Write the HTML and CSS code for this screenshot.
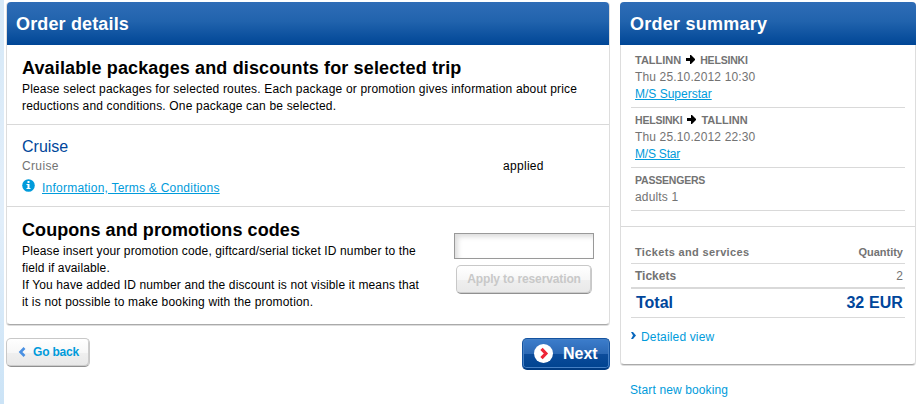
FILE: index.html
```
<!DOCTYPE html>
<html lang="en">
<head>
    <meta charset="UTF-8">
    <title>Order details</title>
    <link rel="stylesheet" href="styles.css">
</head>
<body>
    <div class="page">

        <!-- Order details -->
        <main class="details">
            <div class="panel">
                <h1>Order details</h1>
                <section class="block intro">
                    <h2>Available packages and discounts for selected trip</h2>
                    <p>Please select packages for selected routes. Each package or promotion gives information about price<br>reductions and conditions. One package can be selected.</p>
                </section>
                <section class="block package">
                    <div>
                        <h3>Cruise</h3>
                        <p class="grey">Cruise</p>
                        <div class="info">
                            <svg width="13" height="13" viewBox="0 0 13 13"><circle cx="6.5" cy="6.5" r="6.3" fill="#009bdb"/><path d="M5.5 2h2v2h-2zM4.5 5h3v4h1v1h-4V9h1V6h-1z" fill="#fff"/></svg>
                            <a href="#">Information, Terms &amp; Conditions</a>
                        </div>
                    </div>
                    <p class="applied">applied</p>
                </section>
                <section class="block coupons">
                    <div>
                        <h2>Coupons and promotions codes</h2>
                        <p>Please insert your promotion code, giftcard/serial ticket ID number to the<br>field if available.<br>If You have added ID number and the discount is not visible it means that<br><span class="last">it is not possible to make booking with the promotion.</span></p>
                    </div>
                    <form>
                        <input type="text">
                        <button type="button" class="btn apply" disabled>Apply to reservation</button>
                    </form>
                </section>
            </div>
            <div class="actions">
                <button type="button" class="btn back">
                    <svg width="8" height="10" viewBox="0 0 8 10"><path d="M6.5 1 2.5 5l4 4" fill="none" stroke="#4a90e2" stroke-width="2.6"/></svg>
                    <span>Go back</span>
                </button>
                <button type="button" class="next">
                    <svg width="19" height="19" viewBox="0 0 19 19"><circle cx="9.5" cy="9.5" r="9.5" fill="#fff"/><path d="M7.5 4.8 11.9 9.5l-4.4 4.7" fill="none" stroke="#ee2536" stroke-width="3.2"/></svg>
                    <span>Next</span>
                </button>
            </div>
        </main>

        <!-- Order summary -->
        <aside class="summary">
            <div class="panel">
                <h1>Order summary</h1>
                <div class="trips">
                    <div class="trip">
                        <h4><span>TALLINN</span><svg width="9" height="9" viewBox="0 0 9 9"><path d="M0 3h4V0h1l4 4v1L5 9H4V6H0z"/></svg><span class="helsinki">HELSINKI</span></h4>
                        <p>Thu 25.10.2012 10:30</p>
                        <a href="#">M/S Superstar</a>
                    </div>
                    <div class="trip">
                        <h4><span class="helsinki">HELSINKI</span><svg width="9" height="9" viewBox="0 0 9 9"><path d="M0 3h4V0h1l4 4v1L5 9H4V6H0z"/></svg><span>TALLINN</span></h4>
                        <p>Thu 25.10.2012 22:30</p>
                        <a href="#" class="star">M/S Star</a>
                    </div>
                    <div class="trip passengers">
                        <h4>PASSENGERS</h4>
                        <p>adults 1</p>
                    </div>
                </div>
                <div class="totals">
                    <div class="row head"><span class="services">Tickets and services</span><span>Quantity</span></div>
                    <div class="row tickets"><b>Tickets</b><span>2</span></div>
                    <div class="row total"><span>Total</span><span class="sum">32 EUR</span></div>
                    <a href="#" class="more">
                        <svg width="5" height="7" viewBox="0 0 5 7"><path d="M0 0h2l3 3.5L2 7H0l2-3.5z" fill="#0a68bd"/></svg>
                        <span>Detailed view</span>
                    </a>
                </div>
            </div>
            <a href="#" class="restart">Start new booking</a>
        </aside>
    </div>
</body>
</html>
```
FILE: styles.css
```
* {
    box-sizing: border-box;
}

body {
    margin: 0;
    background: #fff;
    color: #000;
    font: 12px/17px "Liberation Sans", Arial, sans-serif;
    overflow: hidden;
    white-space: nowrap;
}

h1, h2, h3, h4, p {
    margin: 0;
}

a {
    color: #009bdb;
}

svg {
    display: block;
    flex: none;
}

.page {
    display: flex;
    gap: 10px;
    height: 404px;
    padding: 2px 0 0 6px;
    background: linear-gradient(#d5e8f7, #e1eefa 45%, #e1eefa 55%, #cbe3f6) no-repeat 0 0 / 4px 100%;
}

/* Panels */
.panel {
    border: 1px solid #ddd;
    border-top: 0;
    border-bottom-color: #aaa;
    border-radius: 4px;
    box-shadow: 0 1px #ddd;
}

h1 {
    height: 43px;
    padding-left: 9px;
    border-radius: 4px 4px 0 0;
    background: linear-gradient(#2f6db7, #2163ad 45%, #004696);
    color: #fff;
    font-size: 18px;
    line-height: 44px;
    letter-spacing: .15px;
}

.details {
    width: 604px;
}

.details .panel {
    height: 323px;
}

.block {
    padding: 11px 15px 0;
    border-bottom: 1px solid #d9d9d9;
}

h2 {
    font-size: 18px;
    line-height: 25px;
    letter-spacing: .14px;
}

.intro {
    height: 80px;
}

.intro p {
    letter-spacing: .17px;
}

/* Package row */
.package {
    display: flex;
    height: 82px;
}

.package > div {
    width: 481px;
}

h3 {
    color: #00469b;
    font-size: 16px;
    font-weight: normal;
    line-height: 22px;
}

.grey {
    color: #737373;
    letter-spacing: .35px;
}

.info {
    display: flex;
    gap: 7px;
    margin-top: 5px;
}

.info svg {
    margin-top: -1px;
}

.info a {
    letter-spacing: .23px;
}

.applied {
    padding-top: 22px;
    letter-spacing: .3px;
}

/* Coupons */
.coupons {
    display: flex;
    border-bottom: 0;
}

.coupons > div {
    width: 432px;
}

.coupons h2 {
    letter-spacing: .07px;
}

.coupons p {
    letter-spacing: .13px;
}

.coupons .last {
    letter-spacing: .18px;
}

.coupons form {
    display: flex;
    flex-direction: column;
    gap: 6px;
    padding-top: 15px;
}

input {
    width: 140px;
    height: 26px;
    border: 1px solid #999;
    box-shadow: inset 3px 3px 5px #ddd;
}

.btn {
    border: 1px solid #c8c8c8;
    border-bottom-color: #909090;
    border-radius: 5px;
    background: linear-gradient(#fff, #f7f7f7 50%, #efefef 52%, #e8e8e8);
    box-shadow: inset -1px -1px #ccc;
    font: bold 12px/14px "Liberation Sans", Arial, sans-serif;
}

.apply {
    width: 136px;
    height: 29px;
    margin-left: 2px;
    padding: 0 0 2px;
    color: #c8c8c8;
    letter-spacing: -.12px;
}

/* Buttons below */
.actions {
    display: flex;
    justify-content: space-between;
    margin-top: 13px;
}

.back {
    display: flex;
    align-items: center;
    gap: 7px;
    width: 84px;
    height: 29px;
    padding: 0 0 2px 11px;
    color: #009bdb;
    letter-spacing: -.2px;
}

.next {
    display: flex;
    align-items: center;
    gap: 10px;
    width: 88px;
    height: 32px;
    padding: 0 0 0 11px;
    border: 1px solid #1453a0;
    border-bottom: 2px solid #003b82;
    border-radius: 5px;
    background: linear-gradient(#3c7dcc, #2c69b5 50%, #0c4c9b 52%, #004390);
    box-shadow: inset 0 0 0 1px #4680c4;
    color: #fff;
    font: bold 16px/18px "Liberation Sans", Arial, sans-serif;
}

/* Summary */
.summary {
    width: 296px;
    color: #737373;
}

.summary .panel {
    height: 363px;
}

.summary h1 {
    margin: 0 -1px;
    padding-left: 10px;
    letter-spacing: .25px;
}

.trips {
    height: 182px;
    padding: 7px 10px 0;
    border-bottom: 1px solid #d9d9d9;
}

.trip {
    height: 60px;
    padding-left: 4px;
    border-bottom: 1px solid #d9d9d9;
}

.trip:first-child {
    height: 56px;
}

.trip + .trip {
    padding-top: 4px;
}

.trip p {
    letter-spacing: .15px;
}

.trip .star {
    letter-spacing: -.2px;
}

.passengers.trip {
    height: 43px;
}

h4 {
    display: flex;
    gap: 5px;
    font-size: 11px;
    line-height: 17px;
}

h4 svg {
    margin-top: 3px;
}

.helsinki {
    font-size: 10.5px;
    letter-spacing: -.2px;
}

.passengers h4 {
    font-size: 10.5px;
    letter-spacing: -.2px;
}

.totals {
    padding: 15px 10px 0;
}

.row {
    display: flex;
    justify-content: space-between;
    padding: 0 2px 0 4px;
    border-bottom: 1px solid #d9d9d9;
}

.head {
    height: 22px;
    padding-top: 2px;
    font-size: 11px;
    font-weight: bold;
}

.services {
    letter-spacing: .35px;
}

.tickets {
    height: 25px;
    padding-top: 4px;
    border-bottom-width: 2px;
}

.total {
    height: 29px;
    padding-left: 5px;
    color: #00469b;
    font-size: 16px;
    font-weight: bold;
    line-height: 27px;
}

.sum {
    letter-spacing: .1px;
}

.more {
    display: flex;
    gap: 5px;
    margin-top: 11px;
    text-decoration: none;
    letter-spacing: .15px;
}

.more svg {
    margin-top: 3px;
}

.restart {
    display: block;
    margin: 17px 0 0 10px;
    text-decoration: none;
    letter-spacing: .12px;
}
```
